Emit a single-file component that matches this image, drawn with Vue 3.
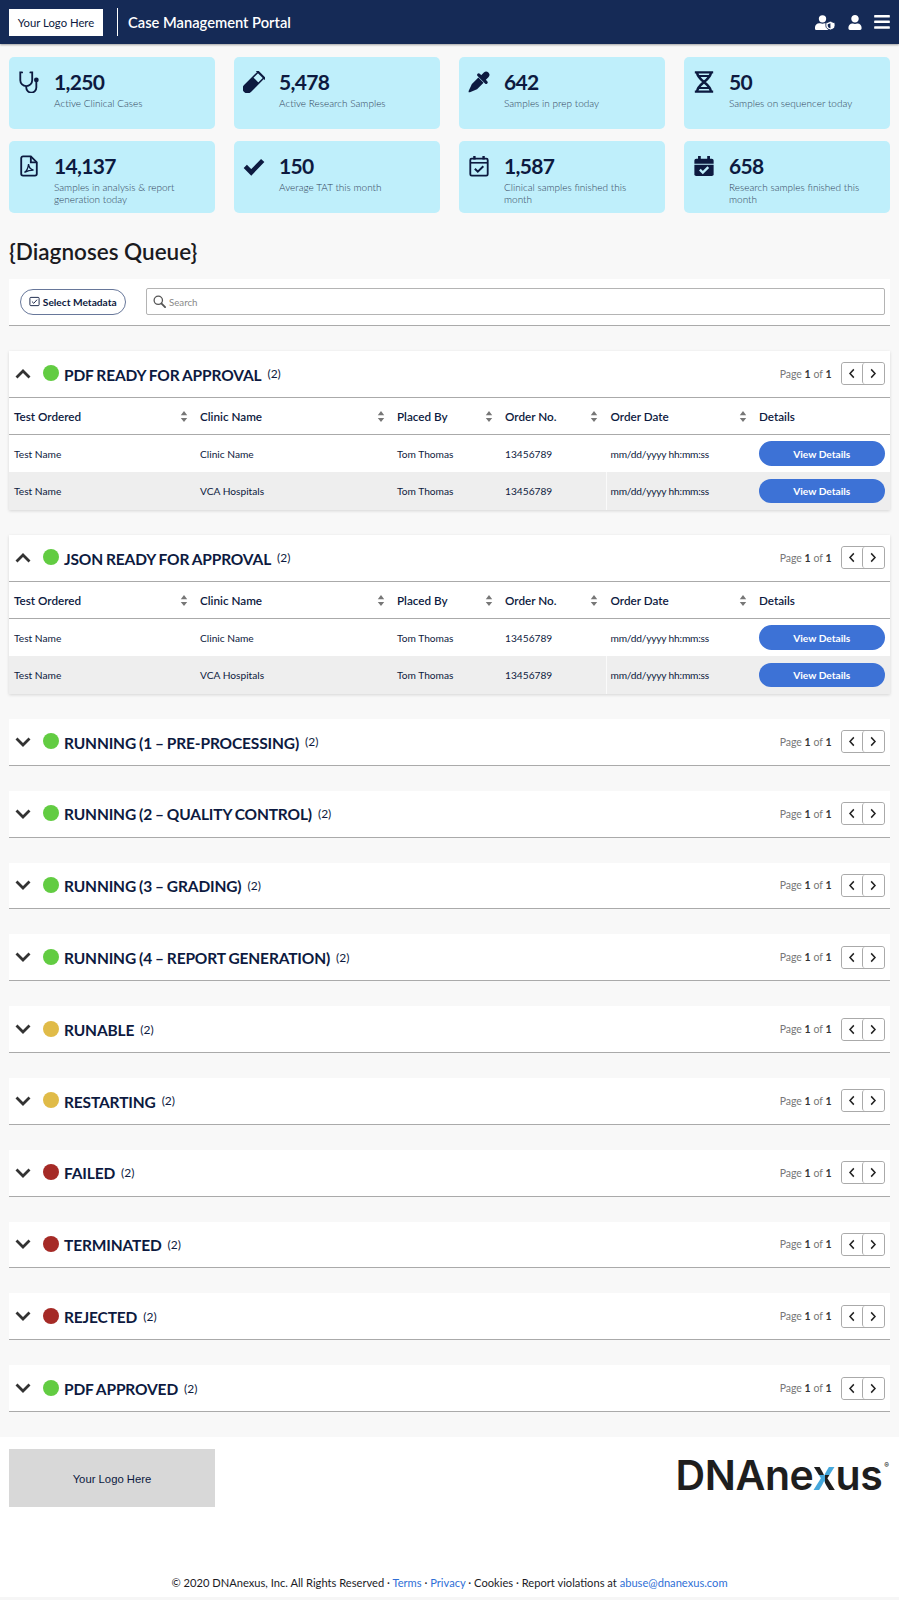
<template>
  <div class="page">
    <header class="topbar">
      <div class="topbar-left">
        <div class="logo-box">Your Logo Here</div>
        <div class="divider"></div>
        <div class="portal-name">Case Management Portal</div>
      </div>
      <div class="topbar-icons">
        <svg class="ic-shield" viewBox="0 0 24 18" fill="currentColor">
          <circle cx="9" cy="4.600" r="4.400" />
          <path d="M1 18a2 2 0 0 1-1-1.800v-1.400C0 12 2.400 10 5 10h1.200c1.800.8 3.800.8 5.600 0h1c.6 0 1 .1 1.500.3v2.200c0 2.200.8 4 2 5.500z" />
          <path d="M18.500 7.500l5.500 2.200v3.300c0 2.500-2.500 4.400-5.500 5-3-.6-5.500-2.500-5.500-5V9.700z" stroke="#152a56" stroke-width="1" />
          <path d="M18.500 10v6c-1.600-.5-3.200-1.500-3.200-3.200v-1.600z" fill="#152a56" />
        </svg>
        <svg class="ic-user" viewBox="0 0 448 512" fill="currentColor">
          <path d="M224 256c70.700 0 128-57.300 128-128S294.700 0 224 0 96 57.300 96 128s57.300 128 128 128zm89.600 32h-16.700c-22.200 10.200-46.900 16-72.900 16s-50.600-5.800-72.900-16h-16.700C60.200 288 0 348.200 0 422.400V464c0 26.500 21.500 48 48 48h352c26.500 0 48-21.500 48-48v-41.600c0-74.200-60.200-134.400-134.400-134.400z" />
        </svg>
        <svg class="ic-bars" viewBox="0 0 448 400" fill="currentColor">
          <path d="M16 72h416c8.800 0 16-7.200 16-16V16c0-8.800-7.200-16-16-16H16C7.200 0 0 7.200 0 16v40c0 8.800 7.200 16 16 16zm0 160h416c8.800 0 16-7.200 16-16v-40c0-8.800-7.200-16-16-16H16c-8.800 0-16 7.200-16 16v40c0 8.800 7.200 16 16 16zm0 160h416c8.800 0 16-7.200 16-16v-40c0-8.800-7.200-16-16-16H16c-8.800 0-16 7.200-16 16v40c0 8.800 7.200 16 16 16z" />
        </svg>
      </div>
    </header>

    <main class="content">
      <div class="cards">
        <div v-for="card in cards" :key="card.label" class="card">
          <svg class="card-icon" viewBox="0 0 24 24" fill="none" stroke="currentColor" stroke-width="2">
            <template v-if="card.icon === 'stethoscope'">
              <path d="M4.500 1.500H2.500v8.500a6.500 6.500 0 0 0 13 0V1.500h-2" stroke-linecap="round" />
              <path d="M9 16.500v1.500a5.500 5.500 0 0 0 11 0v-6" />
              <circle cx="20" cy="9.800" r="2.600" fill="currentColor" stroke="none" />
            </template>
            <template v-else-if="card.icon === 'vial'">
              <g transform="rotate(45 12 12)">
                <path d="M6 1h12" stroke-linecap="round" stroke-width="2.400" />
                <path d="M7.500 1v21a4.500 4.500 0 0 0 9 0V1" stroke-width="1.700" />
                <path d="M7.500 9h9v13a4.500 4.500 0 0 1-9 0z" fill="currentColor" stroke="none" />
              </g>
            </template>
            <template v-else-if="card.icon === 'dropper'">
              <g transform="rotate(45 12 12)" fill="currentColor" stroke="none">
                <path d="M8.500 1a3.500 3.500 0 0 1 7 0v5h-7z" />
                <rect x="4.500" y="5" width="15" height="3.500" rx="1.750" />
                <path d="M8 9h8v10l-3 8-1 1-1-1-3-8z" />
              </g>
            </template>
            <template v-else-if="card.icon === 'dna'">
              <path d="M2 1.500h20M2 22.500h20M6 5.500h12M6 18.500h12" stroke-width="2.200" />
              <path d="M4.500 1.500c0 8.500 15 12.500 15 21M19.500 1.500c0 8.500-15 12.500-15 21" stroke-width="2.800" />
            </template>
            <template v-else-if="card.icon === 'pdf'">
              <path d="M14 1.500H5.500a2 2 0 0 0-2 2v17a2 2 0 0 0 2 2h13a2 2 0 0 0 2-2V8z" />
              <path d="M14 1.500V8h6.500" />
              <path d="M7 19c2-1 4-5 4.500-9 .5 4 2 6 5.500 6.500-3 0-7 1-10 2.500z" stroke-width="1.400" />
            </template>
            <template v-else-if="card.icon === 'check'">
              <path d="M2.500 12.500l6.500 6.500 12.500-13" stroke-width="5" />
            </template>
            <template v-else-if="card.icon === 'calendar'">
              <rect x="2.500" y="4" width="19" height="18.500" rx="1.500" />
              <path d="M3 8.500h18" stroke-width="1.800" />
              <path d="M7 1v4M17 1v4" stroke-width="2.600" />
              <path d="M7.500 15l3.200 3.200 6-6" stroke-width="2.200" />
            </template>
            <template v-else>
              <path d="M1.500 9.500V6a2 2 0 0 1 2-2h17a2 2 0 0 1 2 2v3.500z" fill="currentColor" stroke="none" />
              <path d="M1.500 10.500h21V21a2 2 0 0 1-2 2h-17a2 2 0 0 1-2-2z" fill="currentColor" stroke="none" />
              <path d="M7 1v4M17 1v4" stroke-width="3" />
              <path d="M7.500 16l3.200 3.200 6-6" stroke="#bfeffb" stroke-width="2.600" />
            </template>
          </svg>
          <div class="card-text">
            <div class="card-value">{{ card.value }}</div>
            <div class="card-label">{{ card.label }}</div>
          </div>
        </div>
      </div>

      <h1 class="queue-title">{Diagnoses Queue}</h1>

      <div class="toolbar">
        <button class="meta-btn">
          <svg class="meta-check" viewBox="0 0 12 12" fill="none" stroke="currentColor">
            <rect x="1" y="1.500" width="10" height="9" rx="1" />
            <path d="M3.200 6l2 2 3.600-4" />
          </svg>
          Select Metadata
        </button>
        <div class="search">
          <svg class="search-icon" viewBox="0 0 14 14" fill="none" stroke="currentColor">
            <circle cx="5.700" cy="5.700" r="4.500" stroke-width="1.400" />
            <path d="M9 9l4 4" stroke-width="2" stroke-linecap="round" />
          </svg>
          <span>Search</span>
        </div>
      </div>

      <section v-for="sec in sections" :key="sec.title" class="panel" :class="{ open: sec.rows }">
        <div class="panel-head">
          <svg class="chevron" viewBox="0 0 16 10" fill="none" stroke="currentColor" stroke-width="2.800">
            <path v-if="sec.rows" d="M1.500 8.500L8 2l6.500 6.500" />
            <path v-else d="M1.500 1.500L8 8l6.500-6.500" />
          </svg>
          <span class="dot" :style="{ background: dotColors[sec.status] }"></span>
          <span class="panel-title">{{ sec.title }}</span>
          <span class="panel-count">(2)</span>
          <span class="pager-text">Page <b>1</b> of <b>1</b></span>
          <div class="pager">
            <button>
              <svg viewBox="0 0 8 12" fill="none" stroke="currentColor" stroke-width="1.600"><path d="M6 1.500L1.800 6 6 10.500" /></svg>
            </button>
            <button>
              <svg viewBox="0 0 8 12" fill="none" stroke="currentColor" stroke-width="1.600"><path d="M2 1.500L6.200 6 2 10.500" /></svg>
            </button>
          </div>
        </div>
        <template v-if="sec.rows">
          <div class="grid thead">
            <div v-for="col in columns" :key="col" class="th">
              <span>{{ col }}</span>
              <svg v-if="col !== 'Details'" class="sort" viewBox="0 0 8 12" fill="currentColor">
                <path d="M4 0l3.500 4.500h-7zM4 12L.5 7.500h7z" />
              </svg>
            </div>
          </div>
          <div v-for="(clinic, i) in sec.rows" :key="i" class="grid row" :class="{ alt: i === 1 }">
            <div class="td">Test Name</div>
            <div class="td">{{ clinic }}</div>
            <div class="td">Tom Thomas</div>
            <div class="td">13456789</div>
            <div class="td date">mm/dd/yyyy hh:mm:ss</div>
            <div class="td"><button class="view-btn">View Details</button></div>
          </div>
        </template>
      </section>
    </main>

    <footer class="footer">
      <div class="footer-logos">
        <div class="footer-logo-box">Your Logo Here</div>
        <div class="dna-logo">DNAne<span class="dna-x">x</span>us<sup>®</sup></div>
      </div>
      <div class="legal">
        © 2020 DNAnexus, Inc. All Rights Reserved · <a>Terms</a> · <a>Privacy</a> · Cookies · Report violations at <a>abuse@dnanexus.com</a>
      </div>
    </footer>
  </div>
</template>

<script setup>
const cards = [
  { icon: 'stethoscope', value: '1,250', label: 'Active Clinical Cases' },
  { icon: 'vial', value: '5,478', label: 'Active Research Samples' },
  { icon: 'dropper', value: '642', label: 'Samples in prep today' },
  { icon: 'dna', value: '50', label: 'Samples on sequencer today' },
  { icon: 'pdf', value: '14,137', label: 'Samples in analysis & report generation today' },
  { icon: 'check', value: '150', label: 'Average TAT this month' },
  { icon: 'calendar', value: '1,587', label: 'Clinical samples finished this month' },
  { icon: 'calendarSolid', value: '658', label: 'Research samples finished this month' }
]

const dotColors = { green: '#62cc42', yellow: '#e0bb48', red: '#a52a26' }

const columns = ['Test Ordered', 'Clinic Name', 'Placed By', 'Order No.', 'Order Date', 'Details']

const clinics = ['Clinic Name', 'VCA Hospitals']

const sections = [
  { title: 'PDF READY FOR APPROVAL', status: 'green', rows: clinics },
  { title: 'JSON READY FOR APPROVAL', status: 'green', rows: clinics },
  { title: 'RUNNING (1 – PRE-PROCESSING)', status: 'green' },
  { title: 'RUNNING (2 – QUALITY CONTROL)', status: 'green' },
  { title: 'RUNNING (3 – GRADING)', status: 'green' },
  { title: 'RUNNING (4 – REPORT GENERATION)', status: 'green' },
  { title: 'RUNABLE', status: 'yellow' },
  { title: 'RESTARTING', status: 'yellow' },
  { title: 'FAILED', status: 'red' },
  { title: 'TERMINATED', status: 'red' },
  { title: 'REJECTED', status: 'red' },
  { title: 'PDF APPROVED', status: 'green' }
]
</script>

<style>
html,
body {
  margin: 0;
  background: #fff;
}
</style>

<style scoped>
.page {
  width: 899px;
  height: 1600px;
  overflow: hidden;
  font-family: Lato, "Liberation Sans", sans-serif;
  color: #0d1a40;
  display: flex;
  flex-direction: column;
}

.topbar {
  height: 44px;
  background: #152a56;
  box-shadow: 0 1px 2px rgba(0, 0, 0, 0.35);
  display: flex;
  align-items: center;
  justify-content: space-between;
  padding: 0 9px;
  position: relative;
  flex-shrink: 0;
}

.topbar-left {
  display: flex;
  align-items: center;
}

.logo-box {
  width: 94px;
  height: 27px;
  background: #fff;
  color: #0d1a40;
  font-size: 11.300px;
  display: flex;
  align-items: center;
  justify-content: center;
}

.divider {
  width: 1px;
  height: 28px;
  background: #fff;
  margin: 0 10px 0 14px;
}

.portal-name {
  color: #fff;
  font-size: 14.700px;
  font-weight: 600;
}

.topbar-icons {
  display: flex;
  align-items: center;
  color: #fff;
}

.ic-shield {
  width: 20px;
  height: 15px;
}

.ic-user {
  width: 14px;
  height: 15px;
  margin-left: 13px;
}

.ic-bars {
  width: 16px;
  height: 14px;
  margin-left: 12px;
}

.content {
  background: #f8f8f8;
  height: 1393px;
  padding: 13px 9px 0;
  box-sizing: border-box;
  flex-shrink: 0;
}

.cards {
  display: grid;
  grid-template-columns: repeat(4, 206px);
  column-gap: 19px;
  row-gap: 12.500px;
}

.card {
  height: 71.500px;
  background: #bfeffb;
  border-radius: 5px;
  display: flex;
  padding: 14px 9px 0;
  box-sizing: border-box;
}

.card-icon {
  width: 22px;
  height: 22px;
  color: #0d1a40;
  flex-shrink: 0;
  margin-right: 14px;
}

.card-text {
  margin-top: -2px;
  flex: 1;
}

.card-value {
  font-size: 21px;
  font-weight: 700;
  line-height: 26px;
  letter-spacing: -0.700px;
}

.card-label {
  font-size: 10px;
  font-weight: 300;
  line-height: 12px;
  color: #2f3f5a;
  margin-top: 2px;
  max-width: 140px;
}

.queue-title {
  margin: 0;
  height: 66px;
  font-size: 22.500px;
  font-weight: 600;
  color: #1b1b1f;
  line-height: 26px;
  padding-top: 26px;
  box-sizing: border-box;
}

.toolbar {
  width: 881px;
  height: 47.500px;
  background: #fff;
  border-bottom: 1px solid #aaa;
  box-sizing: border-box;
  display: flex;
  align-items: center;
  padding: 0 5px 0 10.500px;
  margin-bottom: 25px;
}

.meta-btn {
  width: 106.500px;
  height: 25.500px;
  border: 1px solid #67779a;
  border-radius: 13px;
  background: #fff;
  color: #0d1a40;
  font: 700 10.200px Lato, sans-serif;
  display: flex;
  align-items: center;
  justify-content: center;
  padding: 0;
  white-space: nowrap;
}

.meta-check {
  width: 11px;
  height: 11px;
  margin-right: 3px;
}

.search {
  flex: 1;
  height: 27px;
  margin-left: 20px;
  border: 1px solid #b4b4b4;
  border-top-width: 1.500px;
  border-radius: 2px;
  box-sizing: border-box;
  display: flex;
  align-items: center;
  padding-left: 6px;
  color: #888;
  font-size: 9.700px;
}

.search-icon {
  width: 13px;
  height: 13px;
  color: #555;
  margin-right: 3px;
}

.panel {
  width: 881px;
  height: 46.800px;
  margin-bottom: 25px;
  background: #fff;
}

.panel.open {
  height: 159px;
  box-shadow: 0 1px 3px rgba(0, 0, 0, 0.14);
}

.panel-head {
  height: 46.800px;
  border-bottom: 1px solid #aaa;
  box-sizing: border-box;
  display: flex;
  align-items: center;
  padding: 0 5.500px 0 6px;
}

.chevron {
  width: 16px;
  height: 10px;
  color: #333;
  margin-right: 12px;
}

.dot {
  width: 16px;
  height: 16px;
  border-radius: 50%;
  margin-right: 5px;
  margin-top: -1px;
}

.panel-title {
  font-size: 15.500px;
  font-weight: 700;
  letter-spacing: -0.150px;
  word-spacing: -0.600px;
  white-space: nowrap;
  margin-top: 1.500px;
}

.panel-count {
  font-size: 12px;
  margin-left: 6px;
}

.pager-text {
  margin-left: auto;
  font-size: 10.500px;
  color: #777;
}

.pager-text b {
  color: #333;
}

.pager {
  display: flex;
  margin-left: 9px;
  width: 44px;
  height: 23px;
  border: 1px solid #aaa;
  border-radius: 3px;
  box-sizing: border-box;
}

.pager button {
  flex: 1;
  background: #fff;
  border: none;
  padding: 0;
  border-radius: 3px;
  display: flex;
  align-items: center;
  justify-content: center;
  color: #222;
}

.pager button + button {
  border-left: 1px solid #aaa;
}

.pager svg {
  width: 8px;
  height: 11px;
}

.grid {
  display: grid;
  grid-template-columns: 186px 197px 108px 105.500px 148.500px 136px;
}

.thead {
  height: 37px;
  border-bottom: 1px solid #aaa;
  box-sizing: border-box;
}

.th {
  display: flex;
  align-items: center;
  justify-content: space-between;
  padding: 1px 7.500px 0 5px;
  font-size: 11.700px;
  font-weight: 600;
}

.sort {
  width: 8px;
  height: 11px;
  color: #777;
}

.row {
  height: 37.500px;
}

.row.alt {
  background: #eee;
}

.td {
  display: flex;
  align-items: center;
  padding-left: 5px;
  font-size: 10.200px;
}

.td.date {
  letter-spacing: -0.200px;
}

.row.alt .date {
  border-left: 1px solid #fafafa;
  padding-left: 4px;
}

.view-btn {
  width: 125.500px;
  height: 24.500px;
  border: none;
  border-radius: 13px;
  background: #3d72d6;
  color: #fff;
  font: 700 10.200px Lato, sans-serif;
  padding: 0;
}

.footer {
  flex: 1;
  padding: 12px 9px 0;
  display: flex;
  flex-direction: column;
  border-bottom: 3px solid #f6f6f6;
  box-sizing: border-box;
}

.footer-logos {
  display: flex;
  justify-content: space-between;
  align-items: flex-start;
}

.footer-logo-box {
  width: 206px;
  height: 57.500px;
  background: #d8d8d8;
  font: 11.300px "Liberation Sans", sans-serif;
  display: flex;
  align-items: center;
  justify-content: center;
  padding-top: 3px;
  box-sizing: border-box;
}

.dna-logo {
  font: 600 41px Inter, sans-serif;
  color: #1e1e1e;
  letter-spacing: -0.400px;
  line-height: 40px;
  margin: 6px 1px 0 0;
}

.dna-x {
  background: conic-gradient(#45a8dc 0 90deg, #1e1e1e 90deg 180deg, #45a8dc 180deg 270deg, #1e1e1e 270deg);
  -webkit-background-clip: text;
  background-clip: text;
  color: transparent;
}

.dna-logo sup {
  font-size: 7px;
  letter-spacing: 0;
  vertical-align: 22px;
  line-height: 0;
  margin-left: 2px;
}

.legal {
  margin-top: auto;
  margin-bottom: 8px;
  text-align: center;
  font-size: 11.150px;
  color: #1b1b1f;
}

.legal a {
  color: #2f6fd6;
}
</style>
